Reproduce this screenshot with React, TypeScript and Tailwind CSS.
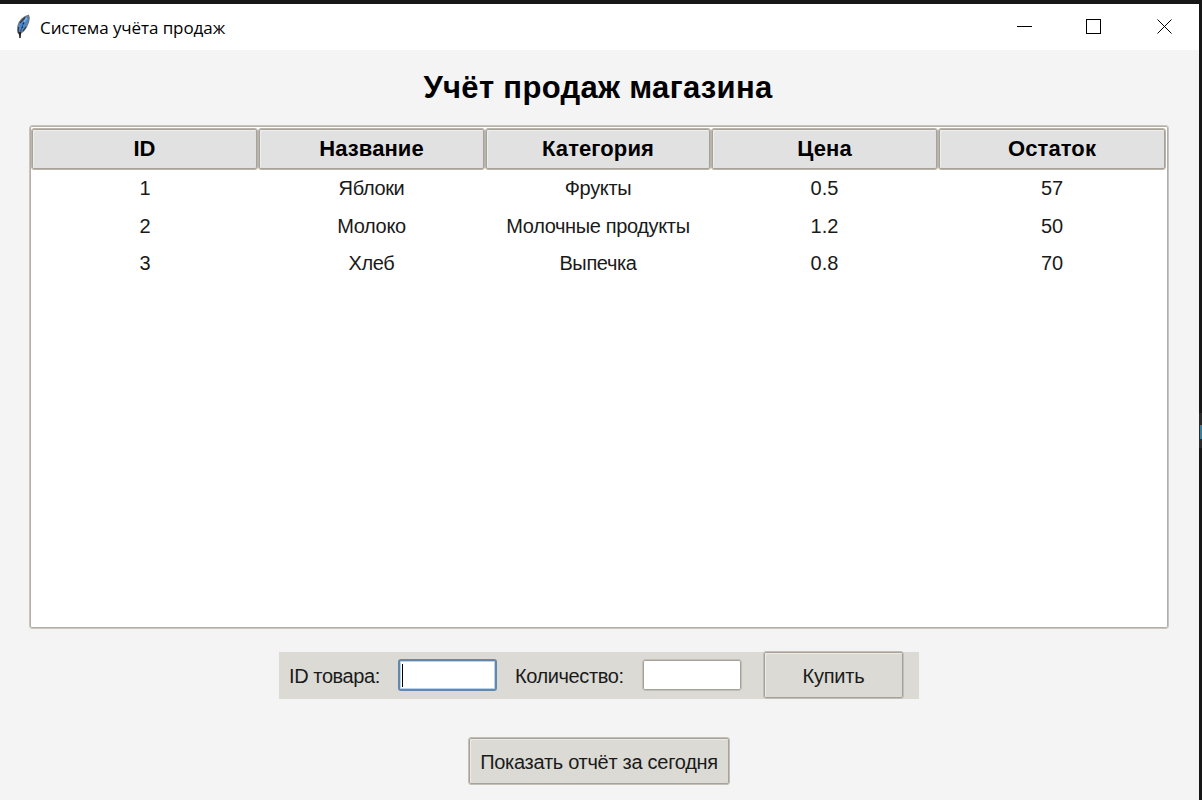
import React from "react";

const columns = [
  { title: "ID", width: "w-[227px]" },
  { title: "Название", width: "w-[227px]" },
  { title: "Категория", width: "w-[226px]" },
  { title: "Цена", width: "w-[227px]" },
  { title: "Остаток", width: "w-[228px]" },
];

const rows = [
  ["1", "Яблоки", "Фрукты", "0.5", "57"],
  ["2", "Молоко", "Молочные продукты", "1.2", "50"],
  ["3", "Хлеб", "Выпечка", "0.8", "70"],
];

function Feather() {
  return (
    <svg width="16" height="26" viewBox="0 0 16 26" className="shrink-0">
      <path d="M13.500 1.500C9 2 4 7 3 12c-.5 3 0 5 1 7h2c4-3 8-9 8.200-15z" fill="#4a8ad0" stroke="#6f757b" strokeWidth="1.300" />
      <path d="M12.500 3C9 7 6 13 5 22" fill="none" stroke="#2a4a70" strokeWidth="0.900" />
      <path d="M10 3.500 5 9M3.500 13l-.5 5 2 3M8 17l3-4" fill="none" stroke="#30373f" strokeWidth="1.200" />
      <path d="M8 9l1 1M7 13l1 .5" stroke="#162334" strokeWidth="1.300" />
      <path d="M5 18v6" stroke="#111" strokeWidth="1.500" />
      <path d="M12 3.500 9 8" stroke="#9cc4ea" strokeWidth="1.200" />
    </svg>
  );
}

function TitleBar() {
  return (
    <header className="flex h-[46px] shrink-0 items-center bg-white pl-[15px]">
      <Feather />
      <span className="ml-[9px] whitespace-nowrap pt-[2px] font-['Open_Sans','Noto_Sans',sans-serif] text-[17px] leading-6 tracking-[-0.08px] text-black">
        Система учёта продаж
      </span>
      <svg width="156" height="16" viewBox="0 0 156 16" className="mr-[27px] ml-auto" fill="none" stroke="#000" shapeRendering="crispEdges">
        <path d="M1 7.500h15" />
        <rect x="70.500" y="0.500" width="14" height="14" />
        <path d="M141.500 .5l14 14M155.500 .5l-14 14" shapeRendering="geometricPrecision" strokeWidth="1" />
      </svg>
    </header>
  );
}

function SalesTable() {
  return (
    <section className="ml-[29px] h-[504px] w-[1140px] shrink-0 rounded-[3px] border border-[#c9c5be] bg-white p-px shadow-[inset_0_0_0_1px_#b3aea6]">
      <div className="flex h-[43px] pt-px">
        {columns.map((c) => (
          <div
            key={c.title}
            className={`${c.width} flex items-center justify-center rounded-[3px] border border-[#b9b4ac] bg-[#e1e1e1] pb-px text-[22px] font-bold tracking-[0.1px] text-black shadow-[inset_0_0_0_1px_#a7a299,inset_2px_2px_0_#efeeec]`}
          >
            {c.title}
          </div>
        ))}
      </div>
      {rows.map((row) => (
        <div key={row[0]} className="flex h-[37.500px] pb-[1.500px]">
          {row.map((cell, i) => (
            <div
              key={columns[i].title}
              className={`${columns[i].width} flex items-center justify-center whitespace-nowrap text-[20px] ${i === 0 ? "pl-px" : ""} ${i === 1 || i === 2 ? "tracking-[-0.36px]" : ""}`}
            >
              {cell}
            </div>
          ))}
        </div>
      ))}
    </section>
  );
}

export default function App() {
  return (
    <div className="flex h-[800px] w-[1202px] overflow-hidden bg-[#171717] pt-1 font-['Liberation_Sans',Arial,sans-serif] text-[#1a1a1a]">
      <div className="flex w-[1199px] flex-col bg-[#f4f4f4]">
        <TitleBar />
        <h1 className="flex h-[75px] shrink-0 items-center justify-center whitespace-nowrap pt-px pr-[3px] text-[31px] font-bold tracking-[0.32px] text-black">
          Учёт продаж магазина
        </h1>
        <SalesTable />
        <form className="mt-[23px] ml-[279px] flex h-[47px] w-[640px] shrink-0 items-center bg-[#dbdad5] text-[20px] whitespace-nowrap">
          <label className="w-[119px] pl-[10px] tracking-[-0.4px]">ID товара:</label>
          <div className="mb-px flex h-[32px] w-[99px] items-center rounded-[3px] border-2 border-[#6288ab] bg-white pl-[2px] shadow-[inset_0_0_0_1px_#b5d3ef]">
            <span className="h-[23px] w-px bg-black" />
          </div>
          <label className="w-[145px] pl-[18px] tracking-[-0.4px]">Количество:</label>
          <div className="mb-px h-[32px] w-[100px] rounded-[3px] border border-[#c3bfb7] bg-white shadow-[inset_0_0_0_1px_#a7a299]" />
          <button type="button" className="mb-px ml-[21px] h-[48px] w-[141px] rounded-[3px] border border-[#c3bfb7] bg-[#dbdad5] pt-[2px] tracking-[-0.2px] shadow-[inset_0_0_0_1px_#a7a299,inset_2px_2px_0_#eeebe7]">
            Купить
          </button>
        </form>
        <button type="button" className="mt-[38px] ml-[468px] h-[48px] w-[262px] shrink-0 rounded-[3px] border border-[#c3bfb7] bg-[#dbdad5] pt-[1px] text-[20px] tracking-[-0.28px] whitespace-nowrap shadow-[inset_0_0_0_1px_#a7a299,inset_2px_2px_0_#eeebe7]">
          Показать отчёт за сегодня
        </button>
      </div>
      <div className="mt-[409px] flex h-[35px] w-[3px] flex-col items-end bg-[#292929] pt-[12px]">
        <span className="h-[14px] w-[2px] bg-[#397e9b]" />
      </div>
    </div>
  );
}
